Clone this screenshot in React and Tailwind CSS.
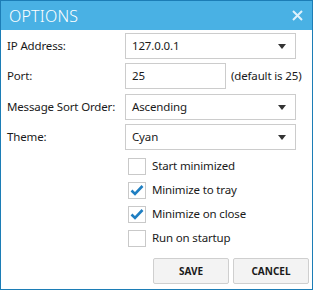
import React from "react";

const font = { fontFamily: '"Noto Sans", "Open Sans", sans-serif' };
const txt = "text-[11.5px] tracking-[-0.15px] text-[#1a1a1a]";

function Arrow() {
  return (
    <svg width="8" height="5" viewBox="0 0 8 5" className="shrink-0">
      <path d="M0 0 L8 0 L4 5 Z" fill="#333" />
    </svg>
  );
}

function Combo({ value }) {
  return (
    <div className="w-[171px] h-[26px] border border-[#cccccc] bg-white flex items-center justify-between pl-[6px] pr-[9px]">
      <span className={txt + " leading-none"}>{value}</span>
      <Arrow />
    </div>
  );
}

function Check({ checked, label }) {
  return (
    <div className="flex items-center h-[18px]">
      <div className="w-[18px] h-[17px] border border-[#c9c9c9] bg-white flex items-center justify-center">
        {checked && (
          <svg width="14" height="12" viewBox="0 0 14 12">
            <path d="M1.5 6.5 L5 10 L12.5 2" fill="none" stroke="#1f7fc2" strokeWidth="2.6" />
          </svg>
        )}
      </div>
      <span className={"ml-[6px] leading-none " + txt}>{label}</span>
    </div>
  );
}

export default function App() {
  return (
    <div style={font} className="w-[313px] h-[290px] border border-[#1c7db6] bg-white flex flex-col">
      <div className="h-[29px] bg-[#49b1e4] flex items-center justify-between pl-[8px] pr-[9px]">
        <span className="text-[16px] text-white leading-none tracking-[0.2px] font-light">OPTIONS</span>
        <svg width="11" height="11" viewBox="0 0 11 11">
          <path d="M1 1 L10 10 M10 1 L1 10" stroke="#dff2fc" strokeWidth="2" />
        </svg>
      </div>
      <div className="flex flex-col pt-[3px]">
        <div className="flex items-center">
          <span className={"w-[124px] pl-[6px] " + txt}>IP Address:</span>
          <Combo value="127.0.0.1" />
        </div>
        <div className="flex items-center mt-[4px]">
          <span className={"w-[124px] pl-[6px] " + txt}>Port:</span>
          <div className="w-[101px] h-[26px] border border-[#cccccc] flex items-center pl-[6px]">
            <span className={txt + " leading-none"}>25</span>
          </div>
          <span className={"ml-[5px] " + txt}>(default is 25)</span>
        </div>
        <div className="flex items-center mt-[5px]">
          <span className={"w-[124px] pl-[6px] " + txt}>Message Sort Order:</span>
          <Combo value="Ascending" />
        </div>
        <div className="flex items-center mt-[4px]">
          <span className={"w-[124px] pl-[6px] " + txt}>Theme:</span>
          <Combo value="Cyan" />
        </div>
        <div className="flex flex-col pl-[127px] mt-[7px] gap-[6px]">
          <Check label="Start minimized" />
          <Check checked label="Minimize to tray" />
          <Check checked label="Minimize on close" />
          <Check label="Run on startup" />
        </div>
        <div className="flex justify-end gap-[4px] pr-[3px] mt-[11px]">
          <button className="w-[76px] h-[26px] bg-[#f3f3f3] border border-[#cfcfcf] rounded-[2px] text-[10px] font-bold text-[#1a1a1a]">SAVE</button>
          <button className="w-[76px] h-[26px] bg-[#f3f3f3] border border-[#cfcfcf] rounded-[2px] text-[10px] font-bold text-[#1a1a1a]">CANCEL</button>
        </div>
      </div>
    </div>
  );
}
